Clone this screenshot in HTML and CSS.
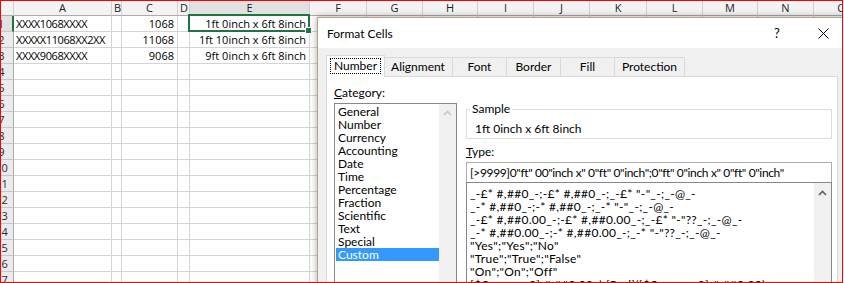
FILE: index.html
```html
<!doctype html>
<html lang="en">
<head>
    <meta charset="UTF-8">
    <title>Format Cells</title>
    <link rel="stylesheet" href="styles.css">
</head>
<body>
    <div class="frame">
        <div id="sheet" class="sheet"></div>

        <div class="dialog">
            <div class="dlg-title">
                <span class="dlg-caption">Format Cells</span>
                <span class="dlg-btn dlg-help">?</span>
                <span class="dlg-btn">
                    <svg width="11" height="11" viewBox="0 0 11 11"><path d="M0.5 0.5L10.5 10.5M10.5 0.5L0.5 10.5" stroke="#000" stroke-width="1"/></svg>
                </span>
            </div>
            <div class="dlg-body">
                <div class="tabs">
                    <div class="tab active"><span class="focus">Number</span></div>
                    <div class="tab">Alignment</div>
                    <div class="tab">Font</div>
                    <div class="tab">Border</div>
                    <div class="tab">Fill</div>
                    <div class="tab">Protection</div>
                </div>
                <div class="panel">
                    <div class="cat-col">
                        <div class="label"><u>C</u>ategory:</div>
                        <div class="listbox cat-list">
                            <ul class="items">
                                <li>General</li>
                                <li>Number</li>
                                <li>Currency</li>
                                <li>Accounting</li>
                                <li>Date</li>
                                <li>Time</li>
                                <li>Percentage</li>
                                <li>Fraction</li>
                                <li>Scientific</li>
                                <li>Text</li>
                                <li>Special</li>
                                <li class="sel">Custom</li>
                            </ul>
                            <div class="vscroll">
                                <svg width="9" height="6" viewBox="0 0 9 6"><path d="M1 5L4.5 1.5L8 5" fill="none" stroke="#c8c8c8" stroke-width="1.6"/></svg>
                            </div>
                        </div>
                    </div>
                    <div class="type-col">
                        <fieldset class="sample">
                            <legend>Sample</legend>
                            <div>1ft 0inch x 6ft 8inch</div>
                        </fieldset>
                        <div class="label"><u>T</u>ype:</div>
                        <div class="type-input">[&gt;9999]0"ft" 00"inch x" 0"ft" 0"inch";0"ft" 0"inch x" 0"ft" 0"inch"</div>
                        <div class="listbox fmt-list">
                            <ul class="items">
                                <li>_-£* #,##0_-;-£* #,##0_-;_-£* "-"_-;_-@_-</li>
                                <li>_-* #,##0_-;-* #,##0_-;_-* "-"_-;_-@_-</li>
                                <li>_-£* #,##0.00_-;-£* #,##0.00_-;_-£* "-"??_-;_-@_-</li>
                                <li>_-* #,##0.00_-;-* #,##0.00_-;_-* "-"??_-;_-@_-</li>
                                <li>"Yes";"Yes";"No"</li>
                                <li>"True";"True";"False"</li>
                                <li>"On";"On";"Off"</li>
                                <li>[$€-x-euro2] #,##0.00_);[Red]([$€-x-euro2] #,##0.00)</li>
                            </ul>
                            <div class="vscroll dark">
                                <svg width="9" height="6" viewBox="0 0 9 6"><path d="M1 5L4.5 1.5L8 5" fill="none" stroke="#606060" stroke-width="1.6"/></svg>
                            </div>
                        </div>
                    </div>
                </div>
            </div>
        </div>
    </div>
    <script>
    window.onload=function(){
        var sheet=document.getElementById('sheet');
        var cols=['A','B','C','D','E','F','G','H','I','J','K','L','M','N','O'];
        var data={
            1:['XXXX1068XXXX','','1068','','1ft 0inch x 6ft 8inch'],
            2:['XXXXX11068XX2XX','','11068','','1ft 10inch x 6ft 8inch'],
            3:['XXXX9068XXXX','','9068','','9ft 0inch x 6ft 8inch']
        };
        var fr=document.createDocumentFragment();

        function cell(cls,text){
            var d=document.createElement('div');
            d.className=cls;
            if(text){
                d.textContent=text;
            }
            fr.appendChild(d);
            return d;
        }

        cell('cell hd corner');
        for(var i=0;i<cols.length;i++){
            cell(i==4?'cell hd hd-on':'cell hd',cols[i]);
        }
        for(var r=1;r<=17;r++){
            cell(r==1?'cell rh rh-on':'cell rh',String(r));
            var row=data[r]||[];
            for(var c=0;c<cols.length;c++){
                var cls='cell';
                if(c==0){
                    cls+=' txt';
                }
                if(c==2||c==4){
                    cls+=' num';
                }
                var d=cell(cls,row[c]);
                if(r==1&&c==4){
                    d.className+=' cur';
                    var box=document.createElement('span');
                    box.className='cursor';
                    d.appendChild(box);
                }
            }
        }
        sheet.appendChild(fr);
    }
    </script>
</body>
</html>
```

FILE: styles.css
```css
body{
    margin:0;
    background:#fff;
}
.frame{
    position:relative;
    width:843px;
    height:283px;
    box-sizing:border-box;
    border:1px solid #f00;
    overflow:hidden;
}

/* sheet */
.sheet{
    display:grid;
    grid-template-columns:24px 98px 10px 56px 12px 120px 57px 56px 55px 56px 56px 57px 56px 55px 56px 56px;
    grid-template-rows:15px repeat(17,16px);
    margin-left:-11px;
    font-family:"Open Sans",sans-serif;
    font-size:11px;
    color:#000;
}
.cell{
    box-sizing:border-box;
    border-right:1px solid #d4d4d4;
    border-bottom:1px solid #d4d4d4;
    padding:0 2px;
    line-height:15px;
    white-space:nowrap;
}
.txt{
    letter-spacing:-0.4px;
}
.num{
    text-align:right;
    padding-right:3px;
}
.hd{
    background:#f3f3f3;
    border-right-color:#d0d0d0;
    border-bottom-color:#ababab;
    text-align:center;
    line-height:14px;
    color:#222;
}
.hd-on{
    background:#e1e1e1;
}
.rh{
    background:#ebebeb;
    border-right-color:#ababab;
    border-bottom-color:#c6c6c6;
    text-align:center;
    color:#1e2a44;
}
.rh-on{
    background:#e1e1e1;
    border-right:2px solid #217346;
}
.cur{
    position:relative;
}
.cursor{
    position:absolute;
    left:-2px;
    right:-1px;
    top:-2px;
    bottom:-1px;
    border:2px solid #217346;
}
.cursor:after{
    content:"";
    position:absolute;
    right:-4px;
    bottom:-4px;
    width:5px;
    height:5px;
    background:#217346;
    border:1px solid #fff;
}

/* dialog */
.dialog{
    position:absolute;
    left:316px;
    top:16px;
    width:530px;
    height:300px;
    box-sizing:border-box;
    border:1px solid #b3a47e;
    background:#f0f0f0;
    box-shadow:0 0 7px rgba(0,0,0,.35);
    font-family:Lato,"Open Sans",sans-serif;
    font-size:12px;
    color:#000;
}
.dlg-title{
    height:30px;
    background:#fff;
    display:flex;
    align-items:center;
}
.dlg-caption{
    flex:1;
    padding-left:9px;
}
.dlg-btn{
    width:46px;
    height:30px;
    display:flex;
    align-items:center;
    justify-content:center;
}
.dlg-help{
    font-size:13px;
}
.dlg-body{
    padding:7px 8px 0 8px;
}
.tabs{
    display:flex;
    align-items:flex-end;
    height:21px;
    padding-left:2px;
}
.tab{
    box-sizing:border-box;
    height:19px;
    min-width:55px;
    padding:0 7px;
    border:1px solid #d9d9d9;
    border-bottom:none;
    line-height:18px;
    text-align:center;
}
.tab+.tab{
    margin-left:-1px;
}
.tab.active{
    position:relative;
    z-index:1;
    height:22px;
    margin:0 -2px -1px -2px;
    padding:3px 4px 0 4px;
    line-height:14px;
    background:#fff;
}
.tab.active+.tab{
    margin-left:0;
}
.focus{
    display:inline-block;
    padding:0 3px;
    outline:1px dotted #000;
}
.panel{
    height:220px;
    display:flex;
    padding:9px 5px 0 7px;
    border:1px solid #d9d9d9;
    background:#fff;
}
.label{
    height:14px;
    line-height:14px;
    margin-bottom:3px;
}
.cat-col{
    width:123px;
}
.listbox{
    display:flex;
    border:1px solid #828790;
    background:#fff;
}
.cat-list{
    height:180px;
}
.items{
    flex:1;
    list-style:none;
    margin:0;
    padding:1px 0 0 1px;
    white-space:nowrap;
    overflow:hidden;
}
.items li{
    line-height:13px;
    padding-left:2px;
}
.items .sel{
    background:#3399ff;
    color:#fff;
}
.vscroll{
    width:17px;
    background:#f0f0f0;
    display:flex;
    justify-content:center;
    align-items:flex-start;
    padding-top:6px;
    box-sizing:border-box;
}
.type-col{
    flex:1;
    margin-left:9px;
    padding-top:16px;
}
.sample{
    margin:0 0 6px 0;
    padding:6px 8px 2px 8px;
    border:1px solid #dcdcdc;
    line-height:14px;
}
.sample legend{
    padding:0 2px;
    margin-left:-5px;
}
.type-input{
    box-sizing:border-box;
    height:20px;
    padding-left:3px;
    border:1px solid #abadb3;
    border-bottom:none;
    line-height:19px;
    letter-spacing:-0.35px;
    white-space:nowrap;
}
.fmt-list{
    height:120px;
}
.fmt-list .items{
    padding:4px 0 0 1px;
    letter-spacing:0.3px;
}
.vscroll.dark{
    padding-top:7px;
}
```
